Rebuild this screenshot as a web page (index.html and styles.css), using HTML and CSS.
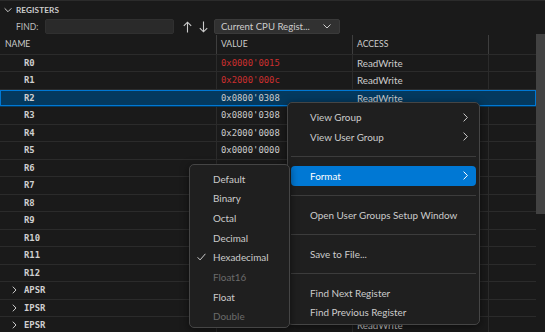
FILE: index.html
```html
<!DOCTYPE html>
<html>
<head>
<meta charset="utf-8">
<link rel="stylesheet" href="styles.css">
</head>
<body>
<div class="panel">
  <div class="section-title">
    <svg class="twisty" width="8" height="8" viewBox="0 0 8 8"><path d="M0.6 2.3 L4 5.7 L7.4 2.3" fill="none" stroke="#cccccc" stroke-width="1"/></svg>
    <span>REGISTERS</span>
  </div>
  <div class="find-row">
    <span class="find-label">FIND:</span>
    <div class="find-input"></div>
    <svg class="arrow up" width="9" height="12" viewBox="0 0 9 12"><path d="M4.5 11.5 V1.2 M0.8 4.9 L4.5 1.2 L8.2 4.9" fill="none" stroke="#cccccc" stroke-width="1.1"/></svg>
    <svg class="arrow down" width="9" height="12" viewBox="0 0 9 12"><path d="M4.5 0.5 V10.8 M0.8 7.1 L4.5 10.8 L8.2 7.1" fill="none" stroke="#cccccc" stroke-width="1.1"/></svg>
    <div class="select">
      <span>Current CPU Regist...</span>
      <svg width="8" height="5" viewBox="0 0 8 5"><path d="M0.5 0.5 L4 4 L7.5 0.5" fill="none" stroke="#cccccc" stroke-width="1"/></svg>
    </div>
  </div>
  <div class="table-wrap">
    <div class="grid">
      <div class="head">
        <div class="c name">NAME</div>
        <div class="c">VALUE</div>
        <div class="c">ACCESS</div>
        <div class="c"></div>
      </div>
      <div class="row"><div class="c name">R0</div><div class="c val red">0x0000'0015</div><div class="c acc">ReadWrite</div><div class="c"></div></div>
      <div class="row"><div class="c name">R1</div><div class="c val red">0x2000'000c</div><div class="c acc">ReadWrite</div><div class="c"></div></div>
      <div class="row sel"><div class="c name">R2</div><div class="c val">0x0800'0308</div><div class="c acc">ReadWrite</div><div class="c"></div></div>
      <div class="row"><div class="c name">R3</div><div class="c val">0x0800'0308</div><div class="c acc"></div><div class="c"></div></div>
      <div class="row"><div class="c name">R4</div><div class="c val">0x2000'0008</div><div class="c acc"></div><div class="c"></div></div>
      <div class="row"><div class="c name">R5</div><div class="c val">0x0000'0000</div><div class="c acc"></div><div class="c"></div></div>
      <div class="row"><div class="c name">R6</div><div class="c val"></div><div class="c acc"></div><div class="c"></div></div>
      <div class="row"><div class="c name">R7</div><div class="c val"></div><div class="c acc"></div><div class="c"></div></div>
      <div class="row"><div class="c name">R8</div><div class="c val"></div><div class="c acc"></div><div class="c"></div></div>
      <div class="row"><div class="c name">R9</div><div class="c val"></div><div class="c acc"></div><div class="c"></div></div>
      <div class="row"><div class="c name">R10</div><div class="c val"></div><div class="c acc"></div><div class="c"></div></div>
      <div class="row"><div class="c name">R11</div><div class="c val"></div><div class="c acc"></div><div class="c"></div></div>
      <div class="row"><div class="c name">R12</div><div class="c val"></div><div class="c acc"></div><div class="c"></div></div>
      <div class="row"><div class="c name exp"><svg class="expander" width="5" height="8" viewBox="0 0 5 8"><path d="M0.8 0.7 L4 4 L0.8 7.3" fill="none" stroke="#cccccc" stroke-width="1"/></svg>APSR</div><div class="c val"></div><div class="c acc"></div><div class="c"></div></div>
      <div class="row"><div class="c name exp"><svg class="expander" width="5" height="8" viewBox="0 0 5 8"><path d="M0.8 0.7 L4 4 L0.8 7.3" fill="none" stroke="#cccccc" stroke-width="1"/></svg>IPSR</div><div class="c val"></div><div class="c acc"></div><div class="c"></div></div>
      <div class="row"><div class="c name exp"><svg class="expander" width="5" height="8" viewBox="0 0 5 8"><path d="M0.8 0.7 L4 4 L0.8 7.3" fill="none" stroke="#cccccc" stroke-width="1"/></svg>EPSR</div><div class="c val"></div><div class="c acc">ReadWrite</div><div class="c"></div></div>
    </div>
    <div class="scrollbar"><div class="thumb"></div></div>
  </div>
</div>

<div class="menu main-menu">
  <div class="item"><span>View Group</span><svg class="chev" width="5" height="9" viewBox="0 0 5 9"><path d="M0.6 0.6 L4.4 4.5 L0.6 8.4" fill="none" stroke="currentColor" stroke-width="1"/></svg></div>
  <div class="item"><span>View User Group</span><svg class="chev" width="5" height="9" viewBox="0 0 5 9"><path d="M0.6 0.6 L4.4 4.5 L0.6 8.4" fill="none" stroke="currentColor" stroke-width="1"/></svg></div>
  <div class="sep"></div>
  <div class="item active"><span>Format</span><svg class="chev" width="5" height="9" viewBox="0 0 5 9"><path d="M0.6 0.6 L4.4 4.5 L0.6 8.4" fill="none" stroke="currentColor" stroke-width="1"/></svg></div>
  <div class="sep"></div>
  <div class="item"><span>Open User Groups Setup Window</span></div>
  <div class="sep"></div>
  <div class="item"><span>Save to File...</span></div>
  <div class="sep"></div>
  <div class="item"><span>Find Next Register</span></div>
  <div class="item"><span>Find Previous Register</span></div>
</div>

<div class="menu sub-menu">
  <div class="item"><span class="check"></span><span>Default</span></div>
  <div class="item"><span class="check"></span><span>Binary</span></div>
  <div class="item"><span class="check"></span><span>Octal</span></div>
  <div class="item"><span class="check"></span><span>Decimal</span></div>
  <div class="item"><span class="check"><svg width="9" height="8" viewBox="0 0 9 8"><path d="M0.6 4.3 L3.1 6.9 L8.4 0.8" fill="none" stroke="#cccccc" stroke-width="1"/></svg></span><span>Hexadecimal</span></div>
  <div class="item disabled"><span class="check"></span><span>Float16</span></div>
  <div class="item"><span class="check"></span><span>Float</span></div>
  <div class="item disabled"><span class="check"></span><span>Double</span></div>
</div>
</body>
</html>
```

FILE: styles.css
```css
html, body {
  margin: 0;
  padding: 0;
}

body {
  width: 545px;
  height: 332px;
  overflow: hidden;
  position: relative;
  background: #1a1a1a;
  color: #cccccc;
  font-family: Lato, "Liberation Sans", sans-serif;
}

.panel {
  height: 332px;
  overflow: hidden;
}

.section-title {
  height: 18px;
  box-sizing: border-box;
  border-top: 1px solid #2b2b2b;
  display: flex;
  align-items: center;
  padding-left: 4px;
  gap: 4px;
  font-weight: 700;
  font-size: 8.2px;
  letter-spacing: 0.1px;
  color: #cccccc;
}

.twisty {
  display: block;
}

.find-row {
  height: 17px;
  display: flex;
  align-items: center;
  padding-left: 16px;
}

.find-label {
  width: 29px;
  font-size: 8.5px;
  color: #bdbdbd;
}

.find-input {
  width: 129px;
  height: 15px;
  box-sizing: border-box;
  background: #2a2a2a;
  border: 1px solid #303030;
  border-radius: 2px;
}

.arrow {
  display: block;
}

.arrow.up {
  margin-left: 9px;
}

.arrow.down {
  margin-left: 7px;
}

.select {
  margin-left: 6px;
  width: 126px;
  height: 15px;
  box-sizing: border-box;
  background: #313131;
  border: 1px solid #3a3a3a;
  border-radius: 2px;
  display: flex;
  align-items: center;
  justify-content: space-between;
  padding: 0 8px 0 6px;
  font-size: 9.6px;
  color: #cccccc;
}

.select svg {
  display: block;
}

.table-wrap {
  display: flex;
}

.grid {
  width: 536px;
}

.scrollbar {
  width: 9px;
  margin-top: -1px;
}

.thumb {
  height: 180px;
  background: #424242;
}

.head,
.row {
  display: grid;
  grid-template-columns: 216px 136px 136px 48px;
  box-sizing: border-box;
}

.head {
  height: 19.5px;
  border-bottom: 1px solid #2b2b2b;
  font-size: 8.6px;
  color: #cccccc;
}

.head .c {
  display: flex;
  align-items: center;
  padding-left: 4px;
  box-sizing: border-box;
}

.head .c + .c {
  border-left: 1px solid #3e3e3e;
}

.head .c.name {
  padding-left: 5px;
}

.row {
  height: 17.5px;
  border-bottom: 1px solid #2b2b2b;
}

.row .c {
  display: flex;
  align-items: center;
  box-sizing: border-box;
  white-space: nowrap;
  overflow: hidden;
}

.row .c + .c {
  border-left: 1px solid #2b2b2b;
}

.row .name {
  padding-left: 24px;
  font-family: "DejaVu Sans Mono", "Liberation Mono", monospace;
  font-weight: 700;
  font-size: 8.9px;
  color: #cfcfcf;
}

.row .name.exp {
  padding-left: 12px;
}

.expander {
  display: block;
  margin-right: 7px;
}

.row .val {
  padding-left: 4px;
  font-family: "DejaVu Sans Mono", "Liberation Mono", monospace;
  font-size: 8.9px;
  color: #cccccc;
}

.row .val.red {
  color: #cd2f2f;
}

.row .acc {
  padding-left: 4px;
  font-size: 9.8px;
  color: #cccccc;
}

.row.sel {
  background: #04395e;
  box-shadow: inset 0 0 0 1px #0078d4;
  border-bottom-color: transparent;
}

.row.sel .c + .c {
  border-left-color: transparent;
}

.menu {
  position: absolute;
  box-sizing: border-box;
  background: #1f1f1f;
  border: 1px solid #454545;
  border-radius: 5px;
  box-shadow: 0 2px 8px rgba(0, 0, 0, 0.55);
  font-size: 9.9px;
  color: #cccccc;
}

.main-menu {
  left: 287px;
  top: 101.5px;
  width: 193px;
  padding: 5px 0 2px;
}

.main-menu .item {
  height: 19.5px;
  padding-left: 19px;
  padding-right: 8px;
}

.item {
  display: flex;
  align-items: center;
  margin: 0 3px;
  border-radius: 4px;
  box-sizing: border-box;
  white-space: nowrap;
}

.item.active {
  background: #0078d4;
  color: #ffffff;
}

.chev {
  display: block;
  margin-left: auto;
}

.sep {
  height: 19.5px;
  margin: 0 3px;
  display: flex;
  align-items: center;
}

.sep::before {
  content: "";
  flex: 1;
  height: 1px;
  background: #3c3c3c;
}

.sub-menu {
  left: 189px;
  top: 164px;
  width: 101px;
  padding: 4px 0 1px;
}

.sub-menu .item {
  height: 19.65px;
}

.check {
  width: 20px;
  padding-left: 4px;
  box-sizing: border-box;
  display: flex;
  align-items: center;
}

.check svg {
  display: block;
}

.item.disabled {
  color: #6b6b6b;
}
```
